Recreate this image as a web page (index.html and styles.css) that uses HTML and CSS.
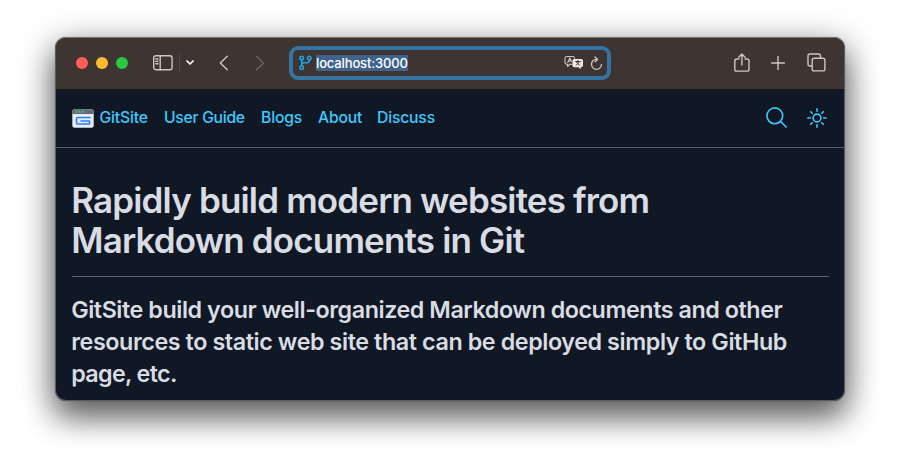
FILE: index.html
```html
<!DOCTYPE html>
<html lang="en">
<head>
<meta charset="utf-8">
<title>GitSite</title>
<link rel="stylesheet" href="styles.css">
</head>
<body>
<div class="window">
  <header class="toolbar">
    <div class="lights"><i class="red"></i><i class="yellow"></i><i class="green"></i></div>
    <svg class="sidebar-icon" width="20" height="16" viewBox="0 0 20 16"><rect x=".7" y=".7" width="18.4" height="14" rx="2.2"/><path d="M7.2 1v14M2.8 4h2.2M2.8 6.4h2.2M2.8 8.8h2.2"/></svg>
    <span class="divider"></span>
    <svg class="chevron" width="8" height="6" viewBox="0 0 8 6"><path d="M1 1l3 3 3-3"/></svg>
    <svg class="back" width="10" height="16" viewBox="0 0 10 16"><path d="M8.3 1.3L1.3 8l7 6.7"/></svg>
    <svg class="forward" width="10" height="16" viewBox="0 0 10 16"><path d="M1.5 1.3L8.5 8l-7 6.7"/></svg>
    <div class="address">
      <svg class="branch" width="13" height="16" viewBox="0 0 13 16"><circle cx="2.7" cy="3" r="1.8"/><circle cx="10.3" cy="3" r="1.8"/><circle cx="2.7" cy="12.6" r="1.8"/><path d="M2.7 4.8v6M10.3 4.8v.6q0 2.3-2.3 2.3H5q-2.3 0-2.3 2.3"/></svg>
      <span class="url">localhost:3000</span>
      <svg class="translate" width="20" height="15" viewBox="0 0 20 15"><path class="line" d="M8.5 9.3H5.7L3.6 11.5V9.3H2.7Q1 9.3 1 7.6V3.2Q1 1.5 2.7 1.5h6.1q1.7 0 1.7 1.7"/><path class="line" d="M3.8 7.5l2-4.6 1.7 3.7M4.5 6h2.6"/><path class="fill" d="M10.3 4h6.9q1.8 0 1.8 1.8v4.600q0 1.800-1.800 1.800h-.6v2l-2.200-2h-4.100q-1.800 0-1.800-1.800V5.800Q8.500 4 10.300 4z"/><path class="dark" d="M11.700 6.500h4.500M13.900 5.500v1M12.200 10.300l3.300-3.500M12.300 7l3.200 3.300"/></svg>
      <svg class="reload" width="13" height="15" viewBox="0 0 13 15"><path d="M6.500 3.300A5 5 0 1 0 11.500 8.300M5 1l2.700 2.400L5.200 5.900"/></svg>
    </div>
    <svg class="share" width="16" height="20" viewBox="0 0 16 20"><path d="M5 6H2.700Q.8 6 .8 7.900v8.300q0 1.900 1.900 1.900h10.400q1.900 0 1.900-1.900V7.900Q15 6 13.100 6H11M7.900 12V1.200M4.800 4.200L7.900 1l3.100 3.200"/></svg>
    <svg class="plus" width="14" height="14" viewBox="0 0 14 14"><path d="M7 .5v13M.5 7h13"/></svg>
    <svg class="tabs" width="19" height="19" viewBox="0 0 19 19"><rect x="5.200" y="5.200" width="12.700" height="12.700" rx="2"/><path d="M5 13H3Q1 13 1 11V3Q1 1 3 1h8.500q2 0 2 2v2"/></svg>
  </header>
  <nav class="nav">
    <a class="brand"><svg width="22" height="19" viewBox="0 0 22 19"><rect x=".3" y=".3" width="21.400" height="18.400" rx="2.500" fill="#e8ebf7"/><path d="M.3 5V2.800Q.3.300 2.800.300h16.400q2.500 0 2.500 2.500V5z" fill="#626978"/><g fill="#39d96a"><circle cx="4.500" cy="2.700" r="1"/><circle cx="7.700" cy="2.700" r="1"/><circle cx="10.900" cy="2.700" r="1"/></g><path d="M18 8.500H6Q4.500 8.500 4.500 10v3.500Q4.500 15 6 15h11.500v-3H9" fill="none" stroke="#2580ff" stroke-width="1.600"/></svg><span>GitSite</span></a>
    <a class="guide">User Guide</a><a class="blogs">Blogs</a><a class="about">About</a><a>Discuss</a>
    <svg class="search" width="21" height="21" viewBox="0 0 21 21"><circle cx="8.800" cy="8.800" r="7.900"/><path d="M14.500 14.500l5.700 5.500"/></svg>
    <svg class="sun" width="20" height="20" viewBox="0 0 20 20"><circle cx="10" cy="10" r="3.900"/><path d="M10 .8v2.500M10 16.700v2.500M.8 10h2.500M16.700 10h2.500M3.700 3.700l1.500 1.500M14.800 14.800l1.500 1.500M3.700 16.300l1.500-1.500M14.800 5.200l1.500-1.500"/></svg>
  </nav>
  <main>
    <h1><span class="t1">Rapidly build modern websites from</span><br><span class="t2">Markdown documents in Git</span></h1>
    <h2><span class="s1">GitSite build your well-organized Markdown documents and other</span><br><span class="s2">resources to static web site that can be deployed simply to GitHub</span><br><span class="s3">page, etc.</span></h2>
  </main>
</div>
</body>
</html>
```
FILE: styles.css
```css
* { box-sizing: border-box; }
body { margin: 0; padding: 37px 55px 0; height: 474px; overflow: hidden; background: #fff; font-family: Inter, "Liberation Sans", sans-serif; }
.window { width: 790px; height: 364px; overflow: hidden; border: 1px solid #595c61; border-top-color: #777472; border-radius: 11px; background: #101725; box-shadow: 0 0 1px rgba(0,0,0,.5), 0 17px 30px rgba(0,0,0,.45), 0 8px 36px rgba(0,0,0,.4); }
svg { display: block; flex: none; fill: none; stroke-width: 1.4; stroke-linecap: round; stroke-linejoin: round; }
.toolbar { display: flex; align-items: center; height: 52px; padding: 0 18px 2px 20px; background: #3e3432; border-bottom: 1px solid #161719; stroke: #cfc6c3; }
.lights { display: flex; gap: 8px; margin-left: -.5px; }
.lights i { width: 12px; height: 12px; border-radius: 50%; }
.red { background: #ff5f57; }
.yellow { background: #febc2e; }
.green { background: #28c840; }
.sidebar-icon { margin-left: 25.5px; }
.divider { width: 1px; height: 18px; margin-left: 6px; background: #51474a; }
.chevron { margin-left: 6px; stroke: #fff; stroke-width: 1.700; }
.back { margin-left: 25px; }
.forward { margin-left: 26px; stroke: #6e6462; }
.address { display: flex; align-items: center; width: 322px; height: 34px; margin-left: 24px; padding: 0 4px 0 6px; border: 4px solid #3474a5; border-radius: 9px; }
.branch { stroke: #19a5e8; stroke-width: 1.500; }
.url { height: 16px; margin-left: 4px; background: #3f638b; color: #fff; font-size: 13px; font-weight: 450; line-height: 16px; letter-spacing: -.14px; white-space: nowrap; }
.translate { margin-left: auto; }
.line { stroke-width: 1.100; }
.fill { fill: #eee9e7; stroke: none; }
.dark { stroke: #3e3432; stroke-width: 1; }
.reload { margin: 1px 0 0 6px; stroke-width: 1.300; }
.share { margin-left: auto; }
.plus { margin-left: 21px; }
.tabs { margin-left: 22px; }
.nav { display: flex; align-items: center; height: 58px; padding: 0 17px 2px 16px; border-bottom: 1px solid #555c69; color: #3ecaff; stroke: #3ecaff; font-size: 15.7px; font-weight: 450; line-height: 24px; white-space: nowrap; letter-spacing: -.17px; }
.brand { display: flex; align-items: center; gap: 5.5px; width: 92px; }
.brand svg { margin-top: 2px; stroke: none; }
.guide { width: 97px; letter-spacing: -.28px; }
.blogs { width: 57px; }
.about { width: 59px; }
.search { margin-left: auto; stroke-width: 1.600; }
.sun { margin-left: 20px; stroke-width: 1.600; }
main { padding: 32px 15px 0 16px; }
h1, h2 { margin: 0; font-weight: 600; white-space: nowrap; color: #d9dce3; }
h1 { height: 97px; border-bottom: 1px solid #596170; font-size: 35px; line-height: 40px; letter-spacing: -.840px; }
h2 { padding-top: 17px; font-size: 23.300px; line-height: 32px; letter-spacing: -.44px; }
h1 span, h2 span { margin-left: -.8px; }
.s2 { letter-spacing: -.41px; }
.s3 { letter-spacing: -.65px; }
```
